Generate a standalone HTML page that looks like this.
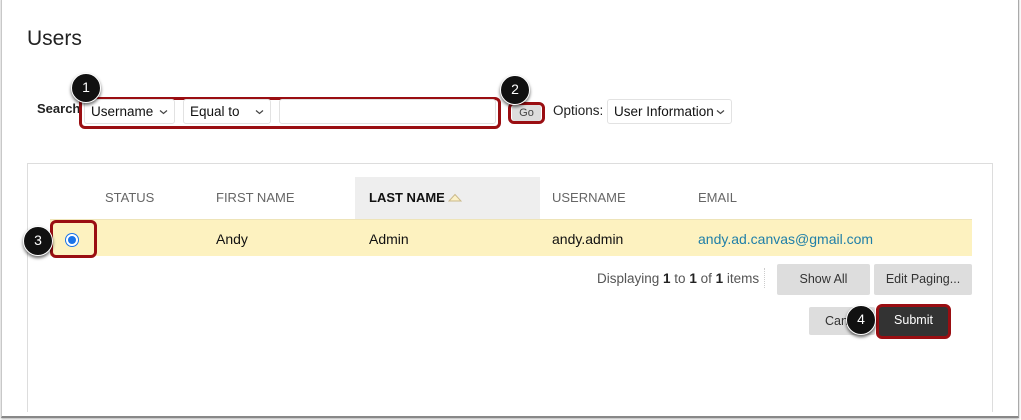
<!DOCTYPE html>
<html><head><style>
*{margin:0;padding:0;box-sizing:border-box}
body{width:1021px;height:420px;background:#fff;font-family:"Liberation Sans",sans-serif;position:relative;overflow:hidden;color:#222}
.a{position:absolute}
.frame{left:1px;top:-2px;width:1018px;height:420px;border:1px solid #c8c8c8;border-bottom:2px solid #888;border-right:1px solid #aaa;box-shadow:0 1px 2px rgba(0,0,0,.3)}
.sel{border:1px solid #e2e2e2;border-radius:3px;background:#fff;font-size:13.5px;height:25px;line-height:23px;padding-left:6px;color:#111}
.chev{position:absolute;right:6px;top:9px;width:9px;height:6px}
.red{border:3px solid #9a0e12;border-radius:6px}
.badge{width:30px;height:30px;border-radius:50%;background:#111;border:1.5px solid #fff;box-shadow:0 2px 3px rgba(0,0,0,.6);color:#fff;font-size:14px;text-align:center;line-height:27px}
.hd{font-size:13px;color:#666;top:190px}
.cell{font-size:14px;top:231px;color:#111}
.btn{background:#ddd;border-radius:2px;font-size:12.5px;text-align:center;color:#333}
</style></head><body>
<div class="a frame"></div>
<div class="a" style="left:27px;top:27px;font-size:21px;color:#222">Users</div>
<div class="a" style="left:37px;top:101px;font-size:13px;font-weight:bold">Search</div>
<div class="a red" style="left:79px;top:97px;width:422px;height:32px"></div>
<div class="a sel" style="left:84px;top:99px;width:91px">Username<svg class="chev" viewBox="0 0 9 6"><path d="M1 1.5L4.5 4.5L8 1.5" fill="none" stroke="#444" stroke-width="1.2"/></svg></div>
<div class="a sel" style="left:183px;top:99px;width:88px">Equal to<svg class="chev" viewBox="0 0 9 6"><path d="M1 1.5L4.5 4.5L8 1.5" fill="none" stroke="#444" stroke-width="1.2"/></svg></div>
<div class="a sel" style="left:279px;top:99px;width:217px"></div>
<div class="a badge" style="left:71px;top:73px">1</div>
<div class="a red" style="left:508px;top:102px;width:37px;height:22px"></div>
<div class="a" style="left:512px;top:105px;width:29px;height:16px;background:#ddd;border-radius:3px;font-size:11px;text-align:center;line-height:16px;color:#444">Go</div>
<div class="a badge" style="left:500px;top:75px">2</div>
<div class="a" style="left:553px;top:103px;font-size:13.5px">Options:</div>
<div class="a sel" style="left:607px;top:99px;width:125px">User Information<svg class="chev" viewBox="0 0 9 6"><path d="M1 1.5L4.5 4.5L8 1.5" fill="none" stroke="#444" stroke-width="1.2"/></svg></div>
<div class="a" style="left:27px;top:163px;width:966px;height:249px;border:1px solid #ddd;border-bottom:none"></div>
<div class="a" style="left:355px;top:177px;width:185px;height:42px;background:#eee"></div>
<div class="a hd" style="left:105px">STATUS</div>
<div class="a hd" style="left:216px">FIRST NAME</div>
<div class="a hd" style="left:369px;color:#111;font-weight:bold">LAST NAME <svg width="14" height="9" viewBox="0 0 14 9" style="vertical-align:0"><path d="M1 8L7 1.5L13 8Z" fill="#fbf1c8" stroke="#cbb98a"/></svg></div>
<div class="a hd" style="left:552px">USERNAME</div>
<div class="a hd" style="left:698px">EMAIL</div>
<div class="a" style="left:50px;top:219px;width:922px;height:37px;background:#fdf2c0;border-top:1px solid #eee4b8"></div>
<div class="a red" style="left:50px;top:220px;width:47px;height:38px"></div>
<div class="a" style="left:66px;top:234px;width:12px;height:12px;border-radius:50%;border:2px solid #fff;background:#1a73e8;box-shadow:0 0 0 1px #1a73e8"></div>
<div class="a badge" style="left:23px;top:226px">3</div>
<div class="a cell" style="left:216px">Andy</div>
<div class="a cell" style="left:369px">Admin</div>
<div class="a cell" style="left:552px">andy.admin</div>
<div class="a cell" style="left:698px;color:#1f7fa8">andy.ad.canvas@gmail.com</div>
<div class="a" style="left:597px;top:271px;font-size:13.5px;color:#555">Displaying <b style="color:#222">1</b> to <b style="color:#222">1</b> of <b style="color:#222">1</b> items</div>
<div class="a" style="left:764px;top:268px;height:20px;border-left:1px dotted #ccc"></div>
<div class="a btn" style="left:777px;top:264px;width:93px;height:31px;line-height:31px">Show All</div>
<div class="a btn" style="left:874px;top:264px;width:98px;height:31px;line-height:31px">Edit Paging...</div>
<div class="a btn" style="left:809px;top:307px;width:66px;height:28px;line-height:28px;text-align:left;padding-left:16px">Cancel</div>
<div class="a red" style="left:876px;top:304px;width:75px;height:35px;background:#333"></div>
<div class="a" style="left:879px;top:313px;width:69px;text-align:center;color:#fff;font-size:12.5px">Submit</div>
<div class="a badge" style="left:846px;top:305px">4</div>
</body></html>
